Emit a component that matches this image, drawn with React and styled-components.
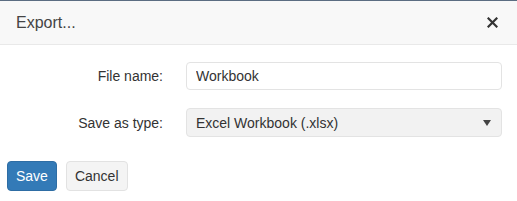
import React from "react";
import styled, { createGlobalStyle } from "styled-components";

const GlobalStyle = createGlobalStyle`
  html, body {
    margin: 0;
    padding: 0;
    background: #fff;
    font-family: "Liberation Sans", Arial, sans-serif;
  }
`;

const Dialog = styled.div`
  width: 517px;
  height: 201px;
  box-sizing: border-box;
  border-top: 1px solid #5b6d82;
  background: #fff;
`;

const Header = styled.div`
  height: 43px;
  display: flex;
  align-items: center;
  justify-content: space-between;
  padding: 0 19px 0 16px;
  background: #f8f8f8;
  border-bottom: 1px solid #e9e9e9;
`;

const Title = styled.div`
  font-size: 16px;
  color: #444;
  padding-top: 1px;
`;

const CloseButton = styled.button`
  border: none;
  background: none;
  padding: 0;
  width: 12px;
  height: 12px;
  display: flex;
  align-items: center;
  justify-content: center;
  cursor: pointer;
`;

const Form = styled.div`
  display: grid;
  grid-template-columns: 163px 1fr;
  column-gap: 23px;
  row-gap: 18px;
  padding: 17px 15px 0 0;
  align-items: center;
`;

const Label = styled.label`
  text-align: right;
  font-size: 14px;
  color: #333;
`;

const Input = styled.input`
  box-sizing: border-box;
  height: 28px;
  width: 100%;
  padding: 0 9px;
  border: 1px solid #e3e3e3;
  border-radius: 4px;
  font-family: inherit;
  font-size: 14px;
  color: #333;
  background: #fff;
  outline: none;
`;

const Select = styled.div`
  box-sizing: border-box;
  height: 29px;
  display: flex;
  align-items: center;
  justify-content: space-between;
  padding: 0 10px 0 9px;
  border: 1px solid #e3e3e3;
  border-radius: 4px;
  background: #f2f2f2;
  font-size: 14px;
  color: #333;
`;

const Caret = styled.span`
  width: 0;
  height: 0;
  border-left: 4px solid transparent;
  border-right: 4px solid transparent;
  border-top: 6px solid #444;
`;

const Footer = styled.div`
  display: flex;
  gap: 9px;
  padding: 24px 0 0 7px;
`;

const Button = styled.button`
  height: 30px;
  padding: 0 8px;
  border-radius: 4px;
  font-family: inherit;
  font-size: 14px;
  cursor: pointer;
  border: 1px solid ${(p) => (p.$primary ? "#2e6da4" : "#e2e2e2")};
  background: ${(p) => (p.$primary ? "#337ab7" : "#f4f4f4")};
  color: ${(p) => (p.$primary ? "#fff" : "#333")};
`;

export default function App() {
  return (
    <>
      <GlobalStyle />
      <Dialog>
        <Header>
          <Title>Export...</Title>
          <CloseButton aria-label="Close">
            <svg width="11" height="11" viewBox="0 0 11 11">
              <path d="M1.5 1.5 L9.5 9.5 M9.5 1.5 L1.5 9.5" stroke="#333" strokeWidth="2.2" strokeLinecap="square" />
            </svg>
          </CloseButton>
        </Header>
        <Form>
          <Label>File name:</Label>
          <Input defaultValue="Workbook" />
          <Label>Save as type:</Label>
          <Select>
            <span>Excel Workbook (.xlsx)</span>
            <Caret />
          </Select>
        </Form>
        <Footer>
          <Button $primary>Save</Button>
          <Button>Cancel</Button>
        </Footer>
      </Dialog>
    </>
  );
}
